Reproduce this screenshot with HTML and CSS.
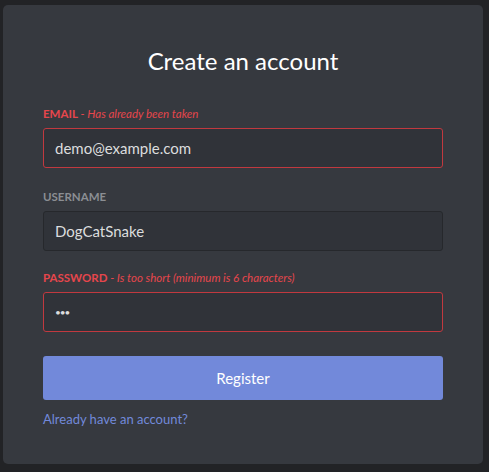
FILE: index.html
```html
<!DOCTYPE html>
<html lang="en">
<head>
<meta charset="utf-8">
<title>Create an account</title>
<link rel="stylesheet" href="styles.css">
</head>
<body>
<main class="card">
  <h1 class="title">Create an account</h1>
  <form class="form">
    <div class="field">
      <label class="label error">EMAIL<span class="msg"> - Has already been taken</span></label>
      <div class="input invalid">demo@example.com</div>
    </div>
    <div class="field">
      <label class="label">USERNAME</label>
      <div class="input">DogCatSnake</div>
    </div>
    <div class="field">
      <label class="label error">PASSWORD<span class="msg"> - Is too short (minimum is 6 characters)</span></label>
      <div class="input invalid pw">•••</div>
    </div>
    <button type="button" class="button">Register</button>
    <a class="link" href="#">Already have an account?</a>
  </form>
</main>
</body>
</html>
```
FILE: styles.css
```css
* { box-sizing: border-box; }
html, body { margin: 0; height: 100%; }
body {
  background: #222326;
  padding: 5px 6px 8px 3px;
  font-family: "Lato", "Noto Sans", sans-serif;
}
.card {
  width: 480px;
  height: 459px;
  background: #36393f;
  border-radius: 5px;
  padding: 40px 40px 0 40px;
}
.title {
  margin: 0 0 29px;
  text-align: center;
  color: #ffffff;
  font-weight: 400;
  font-size: 24px;
  line-height: 32px;
}
.form { display: flex; flex-direction: column; }
.field { display: flex; flex-direction: column; margin-bottom: 21px; }
.field:nth-child(2) { margin-bottom: 19px; }
.field:nth-child(3) { margin-bottom: 24px; }
.label {
  font-size: 11.5px;
  font-weight: 700;
  line-height: 16px;
  color: #8b8e93;
  margin-bottom: 6px;
}
.label.error { color: #e6464c; }
.msg { font-style: italic; font-weight: 400; }
.input {
  height: 40px;
  border: 1px solid #26282c;
  background: #303339;
  border-radius: 3px;
  color: #dcddde;
  font-size: 15px;
  padding: 0 11px;
  display: flex;
  align-items: center;
}
.input.invalid { border-color: #c1393f; }
.input.pw { font-size: 10px; letter-spacing: -1px; }
.button {
  height: 44px;
  border: none;
  border-radius: 3px;
  background: #7289da;
  color: #ffffff;
  font-family: inherit;
  font-size: 15px;
  margin-bottom: 10px;
}
.link {
  color: #7289da;
  font-size: 13px;
  line-height: 18px;
  text-decoration: none;
}
```
